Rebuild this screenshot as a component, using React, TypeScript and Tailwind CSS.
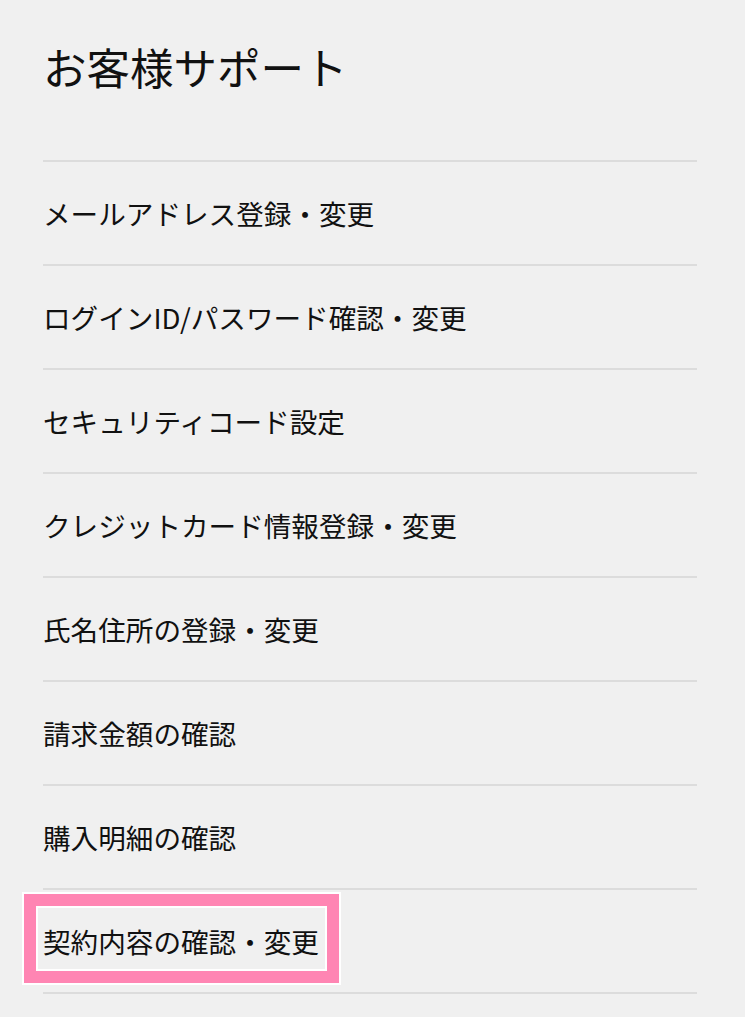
const items = [
  'メールアドレス登録・変更',
  'ログインID/パスワード確認・変更',
  'セキュリティコード設定',
  'クレジットカード情報登録・変更',
  '氏名住所の登録・変更',
  '請求金額の確認',
  '購入明細の確認',
  '契約内容の確認・変更',
];

export default function App() {
  return (
    <div
      className="min-h-screen bg-[#f0f0f0] pl-[43px] pr-[48px] text-[#111]"
      style={{ fontFamily: '"Noto Sans CJK JP", "Noto Sans", sans-serif' }}
    >
      <div className="h-[160px] pt-[45px]">
        <h1 className="text-[43.5px] leading-[44px] font-normal">お客様サポート</h1>
      </div>
      <ul className="border-b-2 border-[#dcdcdc]">
        {items.map((label, i) => (
          <li
            key={label}
            className="flex h-[104px] items-center border-t-2 border-[#dcdcdc]"
          >
            <span className="relative inline-block text-[27.6px] leading-[28px]">
              {label}
              {i === items.length - 1 && (
                <span className="absolute left-[-21px] top-[-35px] h-[93px] w-[319px] border-2 border-white">
                  <span className="block h-full w-full border-[12px] border-[#ff85b3]">
                    <span className="block h-full w-full border-2 border-white" />
                  </span>
                </span>
              )}
            </span>
          </li>
        ))}
      </ul>
    </div>
  );
}
